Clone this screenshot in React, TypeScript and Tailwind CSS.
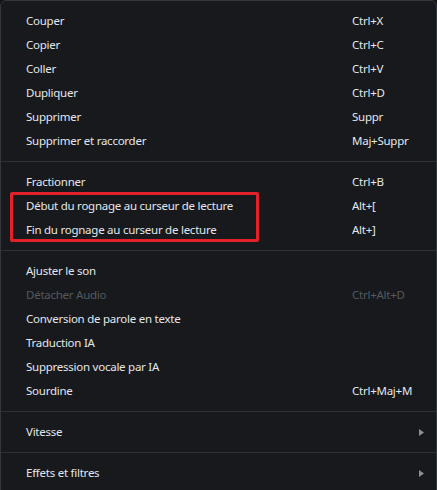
import React from 'react';

type Item = { label: string; shortcut?: string; disabled?: boolean; submenu?: boolean };

const groups: Item[][] = [
  [
    { label: 'Couper', shortcut: 'Ctrl+X' },
    { label: 'Copier', shortcut: 'Ctrl+C' },
    { label: 'Coller', shortcut: 'Ctrl+V' },
    { label: 'Dupliquer', shortcut: 'Ctrl+D' },
    { label: 'Supprimer', shortcut: 'Suppr' },
    { label: 'Supprimer et raccorder', shortcut: 'Maj+Suppr' },
  ],
  [
    { label: 'Fractionner', shortcut: 'Ctrl+B' },
    { label: 'Début du rognage au curseur de lecture', shortcut: 'Alt+[' },
    { label: 'Fin du rognage au curseur de lecture', shortcut: 'Alt+]' },
  ],
  [
    { label: 'Ajuster le son' },
    { label: 'Détacher Audio', shortcut: 'Ctrl+Alt+D', disabled: true },
    { label: 'Conversion de parole en texte' },
    { label: 'Traduction IA' },
    { label: 'Suppression vocale par IA' },
    { label: 'Sourdine', shortcut: 'Ctrl+Maj+M' },
  ],
  [{ label: 'Vitesse', submenu: true }],
  [{ label: 'Effets et filtres', submenu: true }],
];

function MenuRow({ item }: { item: Item }) {
  const color = item.disabled ? 'text-[#55595e]' : 'text-[#e3e7ec]';
  return (
    <div className={`flex h-6 items-center pl-[25px] pr-[14px] ${color}`}>
      <span className="flex-1">{item.label}</span>
      {item.shortcut && <span className="w-[70px]">{item.shortcut}</span>}
      {item.submenu && (
        <svg width="5" height="7" viewBox="0 0 5 7" className="mr-[-2px]">
          <path d="M0 0 L5 3.5 L0 7 Z" fill="#8c8f94" />
        </svg>
      )}
    </div>
  );
}

export default function App() {
  return (
    <div className="h-[490px] w-[437px] overflow-hidden bg-[#121315]">
      <div
        className="relative h-[510px] rounded-t-[6px] border border-[#33363a] bg-[#17191c] py-[8px] text-[11.5px] tracking-[-0.25px]"
        style={{ fontFamily: '"Noto Sans", "Open Sans", sans-serif' }}
      >
        {groups.map((g, gi) => (
          <div key={gi}>
            {gi > 0 && <div className="my-2 h-px bg-[#2d3034]" />}
            {g.map((item) => (
              <MenuRow key={item.label} item={item} />
            ))}
          </div>
        ))}
        <div className="pointer-events-none absolute left-[9px] top-[191px] h-[50px] w-[249px] rounded-[2px] border-[3px] border-[#e3212b]" />
      </div>
    </div>
  );
}
